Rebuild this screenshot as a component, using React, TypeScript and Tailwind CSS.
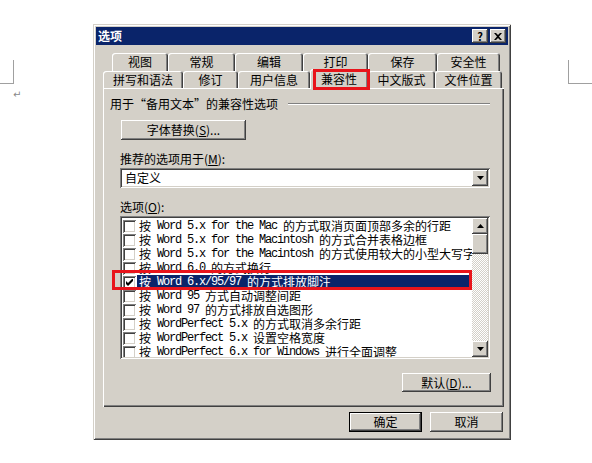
import clsx from "clsx";

// classic Windows 2000 bevels
const raised =
  "shadow-[inset_-1px_-1px_#404040,inset_1px_1px_#ffffff,inset_-2px_-2px_#808080,inset_2px_2px_#d4d0c8]";
const sunken =
  "shadow-[inset_1px_1px_#808080,inset_-1px_-1px_#ffffff,inset_2px_2px_#404040,inset_-2px_-2px_#d4d0c8]";

const tabsTop = [
  { label: "视图", w: "w-[56px]" },
  { label: "常规", w: "w-[67px]" },
  { label: "编辑", w: "w-[68px]" },
  { label: "打印", w: "w-[65px]" },
  { label: "保存", w: "w-[69px]" },
  { label: "安全性", w: "w-[63px]" },
];

const tabsBottom = [
  { label: "拼写和语法", w: "w-[80px]" },
  { label: "修订", w: "w-[55px]" },
  { label: "用户信息", w: "w-[72px]" },
  { label: "兼容性", w: "w-[58px]", selected: true },
  { label: "中文版式", w: "w-[67px]" },
  { label: "文件位置", w: "w-[67px]" },
];

const options = [
  { text: "按 Word 5.x for the Mac 的方式取消页面顶部多余的行距" },
  { text: "按 Word 5.x for the Macintosh 的方式合并表格边框" },
  { text: "按 Word 5.x for the Macintosh 的方式使用较大的小型大写字母" },
  { text: "按 Word 6.0 的方式换行" },
  { text: "按 Word 6.x/95/97 的方式排放脚注", checked: true, selected: true },
  { text: "按 Word 95 方式自动调整间距" },
  { text: "按 Word 97 的方式排放自选图形" },
  { text: "按 WordPerfect 5.x 的方式取消多余行距" },
  { text: "按 WordPerfect 5.x 设置空格宽度" },
  { text: "按 WordPerfect 6.x for Windows 进行全面调整" },
];

// split CJK runs from latin runs so the latin part can use the narrow mono face
const MixedText = ({ text }: { text: string }) => {
  const parts = text.match(/[\u3000-\u9fff\uff00-\uffef]+|[^\u3000-\u9fff\uff00-\uffef]+/g) || [];
  return (
    <>
      {parts.map((p, i) =>
        /[\u3000-\u9fff]/.test(p) ? (
          <span key={i}>{p}</span>
        ) : (
          <span key={i} className="font-['Liberation_Mono',monospace] tracking-[-1.2px] whitespace-pre">
            {p}
          </span>
        )
      )}
    </>
  );
};

const Arrow = ({ up }: { up?: boolean }) => (
  <svg width="7" height="4" viewBox="0 0 7 4" className={clsx(up && "rotate-180")}>
    <path d="M0 0h7L3.5 4z" fill="#000" />
  </svg>
);

const Tab = ({ label, w, selected }: { label: string; w: string; selected?: boolean }) => (
  <div
    className={clsx(
      "flex items-center justify-center rounded-t-[3px] bg-[#d4d0c8] shadow-[inset_1px_1px_#ffffff,inset_-1px_0_#404040,inset_-2px_0_#808080]",
      w,
      selected ? "relative z-10 -mt-[2px] h-[20px] -mb-[1px]" : "h-full"
    )}
  >
    {label}
    {selected && (
      <div className="absolute left-[3px] -right-[2px] top-0 -bottom-[1px] border-[3px] border-[#e8141b]" />
    )}
  </div>
);

const Checkbox = ({ checked }: { checked?: boolean }) => (
  <div className={clsx("flex h-[13px] w-[13px] shrink-0 items-center justify-center bg-white", sunken)}>
    {checked && (
      <svg width="7" height="7" viewBox="0 0 7 7">
        <path d="M0 2v3l2 2l5-5V-1L2 4z" fill="#000" />
      </svg>
    )}
  </div>
);

export default function App() {
  return (
    <div className="relative h-[463px] w-[592px] overflow-hidden bg-white font-['Noto_Sans_CJK_SC',sans-serif] text-[12px] leading-none text-black">
      {/* Word document behind the dialog: page corner marks */}
      <div className="flex justify-between pt-[60px]">
        <div className="flex flex-col">
          <div className="h-[24px] w-[14px] border-r border-b border-[#a0a0a0]" />
          <div className="ml-[13px] mt-[6px] font-['DejaVu_Sans',sans-serif] text-[10px] text-[#888]">↵</div>
        </div>
        <div className="h-[24px] w-[24px] border-l border-b border-[#a0a0a0]" />
      </div>

      {/* dialog window */}
      <div
        className={clsx(
          "absolute left-[93px] top-[24px] flex h-[416px] w-[418px] flex-col bg-[#d4d0c8] p-[3px]",
          "shadow-[inset_1px_1px_#d4d0c8,inset_-1px_-1px_#404040,inset_2px_2px_#ffffff,inset_-2px_-2px_#808080]"
        )}
      >
        {/* title bar */}
        <div className="flex h-[18px] items-center bg-[#0a246a] pl-[2px] pr-[2px]">
          <span className="font-bold text-white">选项</span>
          <div className="ml-auto flex gap-[2px]">
            <div className={clsx("flex h-[14px] w-[16px] items-center justify-center bg-[#d4d0c8] text-[11px] font-bold", raised)}>
              ?
            </div>
            <div className={clsx("flex h-[14px] w-[16px] items-center justify-center bg-[#d4d0c8]", raised)}>
              <svg width="8" height="7" viewBox="0 0 8 7">
                <path d="M0 0h2l2 2l2-2h2L5 3.5L8 7H6L4 5L2 7H0l3-3.5z" fill="#000" />
              </svg>
            </div>
          </div>
        </div>

        {/* tab control */}
        <div className="mt-[8px] flex flex-col pl-[7px] pr-[4px]">
          <div className="flex h-[18px] pl-[9px]">
            {tabsTop.map((t) => (
              <Tab key={t.label} {...t} />
            ))}
          </div>
          <div className="flex h-[17px]">
            {tabsBottom.map((t) => (
              <Tab key={t.label} {...t} />
            ))}
          </div>

          {/* tab page */}
          <div className="flex h-[319px] flex-col shadow-[inset_1px_1px_#ffffff,inset_-1px_-1px_#404040,inset_-2px_-2px_#808080]">
            <div className="mt-[10px] flex items-center pl-[7px] pr-[14px]">
              <span>用于“备用文本”的兼容性选项</span>
              <div className="ml-[10px] h-[2px] flex-1 border-t border-b border-t-[#808080] border-b-white" />
            </div>

            <div className="flex flex-col pl-[17px] pr-[14px]">
              <div className={clsx("mt-[10px] ml-[1px] flex h-[20px] w-[125px] items-center justify-center", raised)}>
                字体替换(<span className="underline">S</span>)...
              </div>

              <div className="mt-[13px] h-[12px]">
                推荐的选项用于(<span className="underline">M</span>):
              </div>
              <div className={clsx("mt-[3px] flex h-[20px] items-center bg-white p-[2px]", sunken)}>
                <span className="pl-[3px]">自定义</span>
                <div className={clsx("ml-auto flex h-[16px] w-[16px] items-center justify-center bg-[#d4d0c8]", raised)}>
                  <Arrow />
                </div>
              </div>

              <div className="mt-[13px] h-[12px]">
                选项(<span className="underline">O</span>):
              </div>
              <div className="relative mt-[3px]">
                <div className={clsx("flex h-[143px] bg-white p-[2px]", sunken)}>
                  <div className="flex min-w-0 flex-1 flex-col overflow-hidden pt-[1px]">
                    {options.map((o) => (
                      <div key={o.text} className="flex h-[14px] shrink-0 items-center pl-[1px] leading-[14px]">
                        <Checkbox checked={o.checked} />
                        <div
                          className={clsx(
                            "ml-[1px] flex h-[14px] flex-1 items-center overflow-hidden whitespace-nowrap pl-[2px]",
                            o.selected && "bg-[#0a246a] text-white"
                          )}
                        >
                          <MixedText text={o.text} />
                        </div>
                      </div>
                    ))}
                  </div>
                  {/* scrollbar */}
                  <div className="flex w-[16px] flex-col">
                    <div className={clsx("flex h-[16px] items-center justify-center bg-[#d4d0c8]", raised)}>
                      <Arrow up />
                    </div>
                    <div className={clsx("h-[20px] bg-[#d4d0c8]", raised)} />
                    <div className="flex-1 bg-[repeating-conic-gradient(#d4d0c8_0%_25%,#ffffff_0%_50%)] bg-[length:2px_2px]" />
                    <div className={clsx("flex h-[16px] items-center justify-center bg-[#d4d0c8]", raised)}>
                      <Arrow />
                    </div>
                  </div>
                </div>
                {/* highlight annotation around the selected option */}
                <div className="absolute -left-[8px] top-[54px] h-[20px] w-[360px] border-[3px] border-[#e8141b]" />
              </div>

              <div className={clsx("mt-[14px] ml-auto mr-[-1px] flex h-[19px] w-[89px] items-center justify-center", raised)}>
                默认(<span className="underline">D</span>)...
              </div>
            </div>
          </div>
        </div>

        {/* dialog buttons */}
        <div className="mt-[5px] flex justify-end gap-[8px] pr-[5px]">
          <div className="h-[20px] w-[73px] border border-black">
            <div className={clsx("flex h-full w-full items-center justify-center", raised)}>确定</div>
          </div>
          <div className={clsx("flex h-[20px] w-[73px] items-center justify-center", raised)}>取消</div>
        </div>
      </div>
    </div>
  );
}
